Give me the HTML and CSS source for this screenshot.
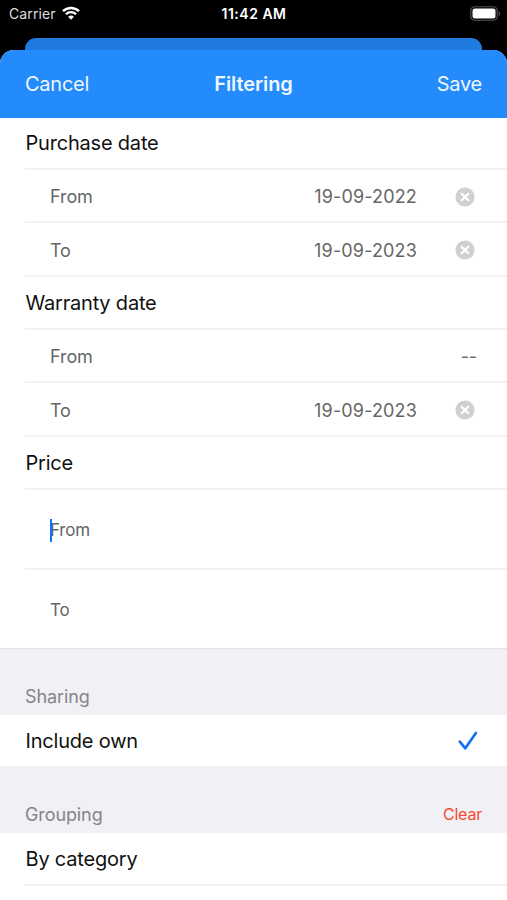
FILE: index.html
```html
<!DOCTYPE html>
<html lang="en">
<head>
  <meta charset="UTF-8" />
  <title>Filtering</title>
  <meta name="viewport" content="width=device-width, initial-scale=1.0"/>
  <link rel="stylesheet" href="styles.css">
</head>
<body>

  <!-- Status bar -->
  <div class="status-bar">
    <div class="carrier">
      <span>Carrier</span>
      <svg class="wifi" width="18" height="14" viewBox="0 0 18 14">
        <path d="M1 5.2a11.4 11.4 0 0 1 16 0" fill="none" stroke="#fff" stroke-width="2.5"/>
        <path d="M3.9 8.3a7.3 7.3 0 0 1 10.2 0" fill="none" stroke="#fff" stroke-width="2.3"/>
        <path d="M9 13.8L6.1 10.8a4.2 4.2 0 0 1 5.8 0z" fill="#fff"/>
      </svg>
    </div>
    <span class="clock">11:42 AM</span>
    <svg class="battery" width="31" height="15" viewBox="0 0 31 15">
      <rect x=".75" y=".75" width="26.5" height="13.5" rx="4" fill="none" stroke="#555" stroke-width="1.2"/>
      <rect x="2.5" y="2.5" width="23" height="10" rx="2.5" fill="#fff"/>
      <path d="M28.7 5.2c2 .8 2 3.8 0 4.6z" fill="#555"/>
    </svg>
  </div>

  <div class="back-sheet"></div>

  <!-- Filter sheet -->
  <div class="sheet">
    <div class="nav-bar">
      <span class="cancel">Cancel</span>
      <h1>Filtering</h1>
      <span class="save">Save</span>
    </div>

    <div class="list filters">
      <div class="row title first"><span>Purchase date</span></div>
      <div class="row sub">
        <span class="label">From</span>
        <span class="date">19-09-2022</span>
        <svg class="remove" width="20" height="20" viewBox="0 0 20 20"><circle cx="10" cy="10" r="9.6" fill="#d0d0d0"/><path d="M6.7 6.7l6.6 6.6M13.3 6.7l-6.6 6.6" stroke="#fff" stroke-width="2.2" stroke-linecap="round"/></svg>
      </div>
      <div class="row sub">
        <span class="label">To</span>
        <span class="date">19-09-2023</span>
        <svg class="remove" width="20" height="20" viewBox="0 0 20 20"><circle cx="10" cy="10" r="9.6" fill="#d0d0d0"/><path d="M6.7 6.7l6.6 6.6M13.3 6.7l-6.6 6.6" stroke="#fff" stroke-width="2.2" stroke-linecap="round"/></svg>
      </div>

      <div class="row title"><span>Warranty date</span></div>
      <div class="row sub">
        <span class="label">From</span>
        <span class="empty">--</span>
      </div>
      <div class="row sub">
        <span class="label">To</span>
        <span class="date">19-09-2023</span>
        <svg class="remove" width="20" height="20" viewBox="0 0 20 20"><circle cx="10" cy="10" r="9.6" fill="#d0d0d0"/><path d="M6.7 6.7l6.6 6.6M13.3 6.7l-6.6 6.6" stroke="#fff" stroke-width="2.2" stroke-linecap="round"/></svg>
      </div>

      <div class="row title"><span>Price</span></div>
      <div class="row field"><span class="placeholder focused">From</span></div>
      <div class="row field last"><span class="placeholder">To</span></div>
    </div>

    <div class="section-header sharing"><span>Sharing</span></div>
    <div class="list">
      <div class="row option last">
        <span>Include own</span>
        <svg class="check" width="20" height="20" viewBox="0 0 20 20"><path d="M1.8 10.6L7.3 17.3 17.9 2" fill="none" stroke="#1272f5" stroke-width="2.7" stroke-linecap="round" stroke-linejoin="round"/></svg>
      </div>
    </div>

    <div class="section-header grouping">
      <span>Grouping</span>
      <span class="clear">Clear</span>
    </div>
    <div class="list">
      <div class="row option"><span>By category</span></div>
    </div>
  </div>

</body>
</html>
```
FILE: styles.css
```css
* {
  box-sizing: border-box;
}

body {
  margin: 0;
  height: 900px;
  overflow: hidden;
  background-color: #000;
  font-family: Inter, "Liberation Sans", sans-serif;
  color: #111;
  display: flex;
  flex-direction: column;
}

svg {
  display: block;
  flex: none;
}

/* STATUS BAR */
.status-bar {
  height: 38px;
  padding: 4px 6px 0 9px;
  display: grid;
  grid-template-columns: 1fr auto 1fr;
  align-items: start;
  color: #fff;
  font-size: 14px;
  line-height: 20px;
}

.carrier {
  display: flex;
  gap: 6px;
  color: #ddd;
  letter-spacing: 0.1px;
}

.wifi {
  margin-top: 2px;
}

.clock {
  font-weight: 600;
  letter-spacing: 0.5px;
  margin-right: 2px;
}

.battery {
  justify-self: end;
  margin-top: 2px;
}

.back-sheet {
  height: 12px;
  margin: 0 25px;
  border-radius: 11px 11px 0 0;
  background-color: #207be0;
}

/* SHEET */
.sheet {
  flex: 1;
  border-radius: 14px 14px 0 0;
  overflow: hidden;
  background-color: #fff;
}

.nav-bar {
  height: 68px;
  padding: 0 25px;
  display: grid;
  grid-template-columns: 1fr auto 1fr;
  align-items: center;
  background-color: #238bfc;
  color: #eef6ff;
  font-size: 20px;
  letter-spacing: -0.25px;
}

.nav-bar h1 {
  margin: 0;
  font-size: 20px;
  font-weight: 600;
  letter-spacing: -0.1px;
}

.save {
  justify-self: end;
}

/* ROWS */
.row {
  display: flex;
  align-items: center;
  margin-left: 25px;
  padding-top: 1px;
  border-bottom: 2px solid #f2f2f2;
}

.title {
  height: 53px;
  font-size: 20px;
  letter-spacing: -0.2px;
}

.first {
  height: 52px;
  padding-top: 0;
}

.sub {
  height: 53px;
  padding: 2px 0 0 25px;
  color: #666;
  font-size: 18px;
  letter-spacing: -0.1px;
}

/* the row that closes a date group */
.sub + .sub {
  height: 54px;
}

.label {
  flex: 1;
}

.date {
  margin-right: 38px;
  letter-spacing: 0.15px;
}

.remove {
  margin-right: 32px;
}

.empty {
  margin-right: 30px;
}

.field {
  height: 80px;
  padding: 2px 0 0 25px;
  color: #666;
  font-size: 17px;
  letter-spacing: -0.2px;
}

.placeholder {
  position: relative;
}

.focused::before {
  content: "";
  position: absolute;
  left: 0;
  top: -1px;
  width: 2px;
  height: 23px;
  background-color: #1272f5;
}

.field.last {
  height: 78px;
}

.option {
  height: 53px;
  font-size: 20px;
  letter-spacing: -0.2px;
}

.title span,
.option span {
  margin-left: 0.5px;
}

.last {
  border-bottom: 0;
}

.option.last {
  height: 51px;
}

.check {
  margin-left: auto;
  margin-right: 29px;
}

/* SECTION HEADERS */
.section-header {
  height: 67px;
  padding: 0 25px 8px;
  display: flex;
  align-items: flex-end;
  justify-content: space-between;
  background-color: #f0f0f5;
  color: #85858a;
  font-size: 18px;
  letter-spacing: -0.1px;
}

.sharing {
  border-top: 1px solid #e2e2e6;
}

.clear {
  margin-bottom: 1px;
  color: #f4492f;
  font-size: 16px;
  letter-spacing: -0.2px;
}
```
